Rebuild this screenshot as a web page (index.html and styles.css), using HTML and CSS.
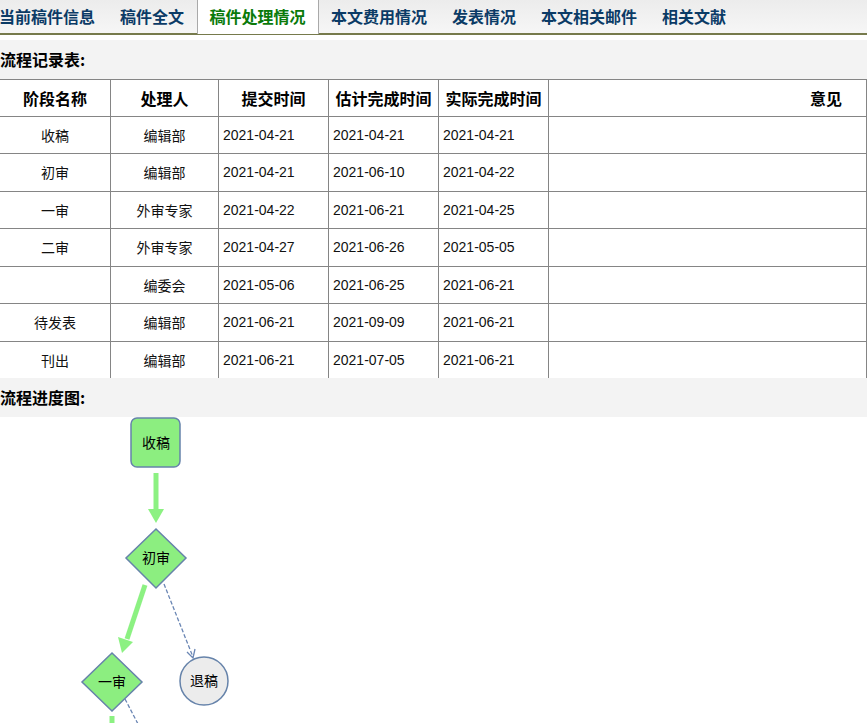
FILE: index.html
```html
<!DOCTYPE html>
<html lang="zh-CN">
  <head>
    <meta charset="UTF-8" />
    <title>稿件处理情况</title>
    <link rel="stylesheet" href="styles.css">
  </head>
  <body>
    <ul class="tabs">
      <li class="tab first">当前稿件信息</li>
      <li class="tab">稿件全文</li>
      <li class="tab active">稿件处理情况</li>
      <li class="tab">本文费用情况</li>
      <li class="tab">发表情况</li>
      <li class="tab">本文相关邮件</li>
      <li class="tab">相关文献</li>
    </ul>

    <div class="section-title">流程记录表:</div>
    <table class="flow-table">
      <thead>
        <tr>
          <th class="c-stage">阶段名称</th>
          <th class="c-person">处理人</th>
          <th class="c-date">提交时间</th>
          <th class="c-date">估计完成时间</th>
          <th class="c-date">实际完成时间</th>
          <th class="c-note">意见</th>
        </tr>
      </thead>
      <tbody>
        <tr>
          <td class="center">收稿</td><td class="center">编辑部</td>
          <td class="date">2021-04-21</td><td class="date">2021-04-21</td><td class="date">2021-04-21</td><td></td>
        </tr>
        <tr>
          <td class="center">初审</td><td class="center">编辑部</td>
          <td class="date">2021-04-21</td><td class="date">2021-06-10</td><td class="date">2021-04-22</td><td></td>
        </tr>
        <tr>
          <td class="center">一审</td><td class="center">外审专家</td>
          <td class="date">2021-04-22</td><td class="date">2021-06-21</td><td class="date">2021-04-25</td><td></td>
        </tr>
        <tr>
          <td class="center">二审</td><td class="center">外审专家</td>
          <td class="date">2021-04-27</td><td class="date">2021-06-26</td><td class="date">2021-05-05</td><td></td>
        </tr>
        <tr>
          <td class="center"></td><td class="center">编委会</td>
          <td class="date">2021-05-06</td><td class="date">2021-06-25</td><td class="date">2021-06-21</td><td></td>
        </tr>
        <tr>
          <td class="center">待发表</td><td class="center">编辑部</td>
          <td class="date">2021-06-21</td><td class="date">2021-09-09</td><td class="date">2021-06-21</td><td></td>
        </tr>
        <tr>
          <td class="center">刊出</td><td class="center">编辑部</td>
          <td class="date">2021-06-21</td><td class="date">2021-07-05</td><td class="date">2021-06-21</td><td></td>
        </tr>
      </tbody>
    </table>

    <div class="section-title">流程进度图:</div>
    <div class="chart">
      <svg width="867" height="340" viewBox="0 0 867 340">
        <!-- 收稿 -->
        <rect class="node" x="131" y="1" width="49" height="49" rx="6" />
        <text class="label" x="156" y="31">收稿</text>

        <!-- 收稿 -> 初审 -->
        <line class="flow" x1="156" y1="56" x2="156" y2="94" />
        <polygon class="flow-head" points="148,92 164,92 156,106" />

        <!-- 初审 -->
        <polygon class="node" points="156,112 186,141 156,171 126,141" />
        <text class="label" x="156" y="146">初审</text>

        <!-- 初审 -> 一审 -->
        <line class="flow" x1="145" y1="168" x2="127" y2="222" />
        <polygon class="flow-head" points="118,220 133,225 122,236" />

        <!-- 初审 -> 退稿 -->
        <line class="reject" x1="164" y1="167" x2="193" y2="240" />
        <polyline class="reject-head" points="187,235 193,241 195,232" />

        <!-- 退稿 -->
        <circle class="end" cx="204" cy="264" r="24" />
        <text class="label" x="204" y="269">退稿</text>

        <!-- 一审 -->
        <polygon class="node" points="112,236 142,265 112,294 82,265" />
        <text class="label" x="112" y="270">一审</text>

        <!-- 一审 -> 二审 -->
        <line class="flow" x1="112" y1="299" x2="112" y2="340" />
        <line class="reject" x1="125" y1="282" x2="150" y2="330" />
      </svg>
    </div>
  </body>
</html>
```

FILE: styles.css
```css
body {
  margin: 0;
  font-family: "Liberation Sans", "Noto Sans CJK SC", sans-serif;
  font-size: 14px;
  color: #000;
  background: #fff;
  overflow: hidden;
}
.tabs {
  display: flex;
  margin: 0 0 5px 0;
  padding: 0;
  list-style: none;
  height: 33px;
  background: linear-gradient(#ececec, #f6f6f6);
  border-bottom: 2px solid #767a4c;
}
.tab {
  padding: 0 12.5px;
  line-height: 32px;
  font-family: "Noto Sans CJK SC", sans-serif;
  font-size: 16px;
  font-weight: bold;
  color: #0b3b66;
  white-space: nowrap;
}
.tab.first {
  padding-left: 0;
  margin-left: -1px;
}
.tab.active {
  background: #fff;
  color: #0a7a0a;
  border-left: 1px solid #a9a9a9;
  border-right: 1px solid #a9a9a9;
  padding: 0 12px;
  height: 34px;
}
.section-title {
  height: 39px;
  line-height: 39px;
  background: #f3f3f3;
  font-family: "Noto Sans CJK SC", sans-serif;
  font-size: 16px;
  font-weight: bold;
}
.flow-table {
  width: 100%;
  border-collapse: collapse;
  table-layout: fixed;
}
.flow-table th,
.flow-table td {
  height: 36.5px;
  padding: 0 4px;
  border: 1px solid #858585;
  font-family: "Noto Sans CJK SC", sans-serif;
  white-space: nowrap;
}
.flow-table tr > :first-child {
  border-left: none;
}
.flow-table tbody tr:last-child td {
  border-bottom: none;
}
.flow-table th {
  height: 35.5px;
  font-size: 16px;
  font-weight: bold;
  text-align: center;
}
.c-stage { width: 102px; }
.c-person { width: 99px; }
.c-date { width: 101px; }
.flow-table th.c-note {
  text-align: right;
  padding-right: 24px;
}
.flow-table td.center {
  text-align: center;
  font-size: 14px;
  color: #111;
}
.flow-table td.date {
  font-family: "Liberation Sans", sans-serif;
  font-size: 14px;
  color: #111;
}
.chart {
  height: 320px;
}
.chart svg {
  display: block;
}
.node {
  fill: #8cee80;
  stroke: #6683aa;
  stroke-width: 1.5;
}
.end {
  fill: #ececec;
  stroke: #6683aa;
  stroke-width: 1.5;
}
.label {
  font-family: "Noto Sans CJK SC", sans-serif;
  font-size: 14px;
  text-anchor: middle;
  fill: #000;
}
.flow {
  stroke: #8cf182;
  stroke-width: 5;
}
.flow-head {
  fill: #8cf182;
}
.reject {
  stroke: #6a86b4;
  stroke-width: 1.3;
  stroke-dasharray: 4 2;
}
.reject-head {
  fill: none;
  stroke: #6a86b4;
  stroke-width: 1.3;
}
```
